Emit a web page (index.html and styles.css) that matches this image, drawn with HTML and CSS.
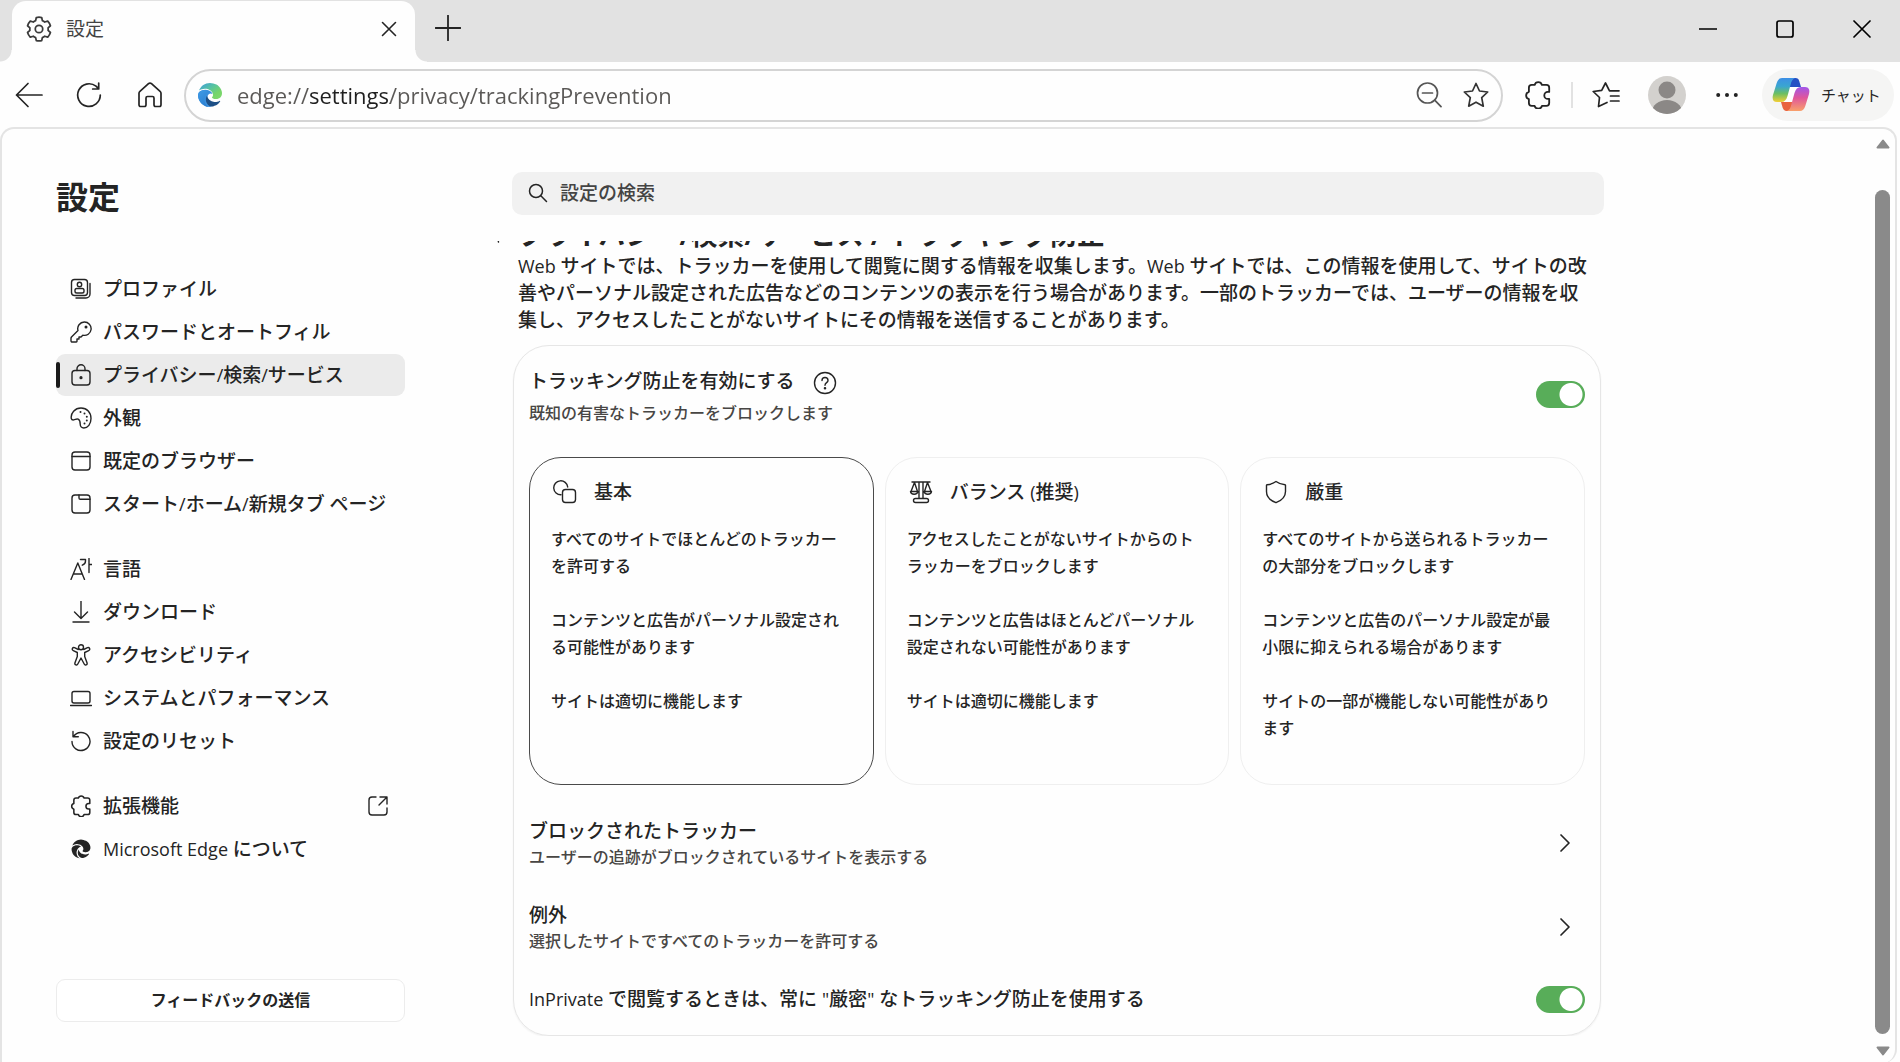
FILE: index.html
```html
<!DOCTYPE html>
<html lang="ja">
<head>
<meta charset="utf-8">
<meta name="viewport" content="width=device-width, initial-scale=1">
<title>設定</title>
<link rel="stylesheet" href="styles.css">
</head>
<body>
<svg class="sprite" aria-hidden="true">
  <symbol id="puzzle" viewBox="2 1.800 20 20"><path d="M9.600 4.600a2.700 2.700 0 0 1 5.200 0H18a2 2 0 0 1 2 2v3h-1a2.500 2.500 0 0 0 0 5h1v3a2 2 0 0 1-2 2h-3.200a2.700 2.700 0 0 1-5.200 0H7.500a2 2 0 0 1-2-2v-2.900a2.700 2.700 0 0 1 0-5.200V6.600a2 2 0 0 1 2-2z"/></symbol>
  <symbol id="search" viewBox="0 0 20 20"><circle cx="8" cy="8" r="6.500"/><path d="M12.800 12.800 18.500 18.500"/></symbol>
  <symbol id="chevron" viewBox="0 0 20 20"><path d="m6 2 8 8-8 8"/></symbol>
</svg>

<header class="titlebar">
  <div class="tab">
    <svg class="icon tab-gear" viewBox="0 0 24 24"><path d="M9.700 2.200a10 10 0 0 1 4.600 0l.6 2.600a7.600 7.600 0 0 1 2 1.200l2.600-.8a10 10 0 0 1 2.300 4l-2 1.800a7.600 7.600 0 0 1 0 2.200l2 1.800a10 10 0 0 1-2.300 4l-2.600-.8a7.600 7.600 0 0 1-2 1.200l-.6 2.600a10 10 0 0 1-4.600 0l-.6-2.600a7.600 7.600 0 0 1-2-1.200l-2.600.8a10 10 0 0 1-2.300-4l2-1.800a7.600 7.600 0 0 1 0-2.200l-2-1.800a10 10 0 0 1 2.300-4l2.600.8a7.600 7.600 0 0 1 2-1.200z"/><circle cx="12" cy="12" r="3.200"/></svg>
    <span class="tab-title">設定</span>
    <button class="bare tab-close" aria-label="タブを閉じる"><svg class="icon" viewBox="0 0 16 16"><path d="m1.500 1.500 13 13m0-13-13 13"/></svg></button>
  </div>
  <button class="bare new-tab" aria-label="新しいタブ"><svg class="icon" viewBox="0 0 26 26"><path d="M13 .5v25M.5 13h25"/></svg></button>
  <div class="window-controls">
    <button class="bare" aria-label="最小化"><svg class="icon" viewBox="0 0 18 18"><path d="M.5 9h17"/></svg></button>
    <button class="bare" aria-label="最大化"><svg class="icon" viewBox="0 0 18 18"><rect x="1" y="1" width="16" height="16" rx="2"/></svg></button>
    <button class="bare" aria-label="閉じる"><svg class="icon" viewBox="0 0 18 18"><path d="m1 1 16 16M17 1 1 17"/></svg></button>
  </div>
</header>

<div class="toolbar">
  <button class="bare tool" aria-label="戻る"><svg class="icon i28" viewBox="0 0 28 28"><path d="M27 14H1.500M13 2.500 1.500 14 13 25.500"/></svg></button>
  <button class="bare tool" aria-label="更新"><svg class="icon i26" viewBox="0 0 26 26"><path d="M24.300 13A11.300 11.300 0 1 1 20 4.200l2.700 2.600M22.700 1v6h-6"/></svg></button>
  <button class="bare tool" aria-label="ホーム"><svg class="icon i26" viewBox="0 0 26 26"><path d="M2 11.200c0-.8.3-1.400.9-1.900L11.500 1.700c.9-.8 2.100-.8 3 0l8.600 7.600c.6.5.9 1.100.9 1.900v11.600c0 1-.7 1.700-1.700 1.700h-3.600c-1 0-1.700-.7-1.700-1.700V16c0-.9-.6-1.500-1.500-1.500h-5c-.9 0-1.500.6-1.500 1.500v6.800c0 1-.7 1.700-1.700 1.700H3.700c-1 0-1.700-.7-1.700-1.700z"/></svg></button>
  <div class="address">
    <svg class="edge-logo" viewBox="0 0 24 24">
      <defs>
        <linearGradient id="eg1" x1="0" y1="0" x2="1" y2="1"><stop offset="0" stop-color="#3d9be0"/><stop offset=".4" stop-color="#57c4a0"/><stop offset=".7" stop-color="#76d56a"/><stop offset="1" stop-color="#7fd96c"/></linearGradient>
        <linearGradient id="eg2" x1="0" y1="0" x2=".6" y2="1"><stop offset="0" stop-color="#3f9be6"/><stop offset="1" stop-color="#2b7fd0"/></linearGradient>
      </defs>
      <path fill="#3a8fdd" d="M1 9C4 6.500 8 6 11 7.500c2 1 3 2 3.500 3.500-2-1.500-5 0-5 3 0 3.500 3 6.500 8 7L12 24C5 24 0 18 0 12z"/>
      <path fill="#1d4f86" d="M21.860 17.860q.14 0 .25.12.1.13.1.25t-.11.33l-.32.46-.43.53-.44.5q-.26.25-.38.37l-.22.23q-.58.53-1.340 1.040-.76.51-1.600.91-.86.4-1.740.64t-1.670.24q-.9 0-1.690-.28-.8-.28-1.480-.78-.68-.5-1.220-1.170-.53-.66-.92-1.440-.38-.77-.58-1.600-.2-.83-.2-1.670 0-1 .32-1.960.33-.97.87-1.800.14.95.55 1.770.41.82 1.020 1.500.6.68 1.380 1.210.78.54 1.640.9.86.36 1.770.56.92.2 1.800.2 1.120 0 2.180-.24 1.060-.23 2.060-.72l.2-.1.2-.05z"/>
      <path fill="url(#eg2)" d="M6.360 16.590q0 1.100.27 2.150.27 1.060.78 2.030.51.96 1.240 1.770.74.82 1.660 1.400-1.470-.2-2.800-.74-1.330-.55-2.480-1.370-1.150-.83-2.080-1.900-.92-1.070-1.580-2.330T.36 14.940Q0 13.540 0 12.060q0-.81.32-1.490.31-.68.83-1.230.53-.55 1.200-.96.66-.4 1.350-.66.74-.27 1.500-.39.78-.12 1.550-.12.7 0 1.420.1.72.12 1.400.35.68.23 1.320.57.63.35 1.160.83-.35 0-.7.07-.33.07-.65.23-.63.28-1.200.74-.57.46-1.050 1.040-.48.58-.87 1.260-.38.67-.65 1.390-.27.71-.42 1.440-.15.72-.15 1.380z"/>
      <path fill="url(#eg1)" d="M11.960.06q1.700 0 3.330.39 1.630.38 3.070 1.150 1.430.77 2.620 1.930 1.180 1.160 1.980 2.700.49.94.76 1.960.28 1 .28 2.080 0 .89-.23 1.700-.24.8-.69 1.480-.45.68-1.100 1.220-.64.53-1.450.88-.54.24-1.110.36-.58.13-1.160.13-.42 0-.97-.03-.54-.03-1.100-.12-.55-.1-1.050-.28-.5-.19-.84-.5-.12-.09-.23-.24-.1-.16-.1-.33 0-.15.16-.35.16-.2.35-.5.2-.28.36-.68.16-.4.16-.95 0-1.060-.4-1.960-.4-.91-1.060-1.640-.66-.74-1.520-1.280-.86-.55-1.790-.89-.84-.3-1.720-.44-.87-.14-1.760-.14-1.550 0-3.060.45T.94 7.550q.71-1.740 1.810-3.130 1.100-1.380 2.520-2.350Q6.680 1.100 8.370.58q1.700-.52 3.580-.52Z"/>
    </svg>
    <input class="url" type="text" aria-label="アドレス" value="edge://settings/privacy/trackingPrevention">
    <button class="bare tool-sm" aria-label="縮小"><svg class="icon i26" viewBox="0 0 26 26"><circle cx="11.500" cy="11" r="10"/><path d="M6.500 11h10M18.700 18.200l6.300 6.500"/></svg></button>
    <button class="bare tool-sm" aria-label="お気に入りに追加"><svg class="icon i26" viewBox="0 0 26 26"><path d="M13 1.500 16.500 9l8.200 1-6 5.700 1.600 8.500L13 20.200l-7.300 4 1.600-8.500-6-5.700 8.200-1z"/></svg></button>
  </div>
  <button class="bare tool" aria-label="拡張機能"><svg class="icon puzzle-lg"><use href="#puzzle"/></svg></button>
  <span class="separator"></span>
  <button class="bare tool" aria-label="お気に入り"><svg class="icon i28" viewBox="0 0 28 26"><path d="M15 20.500 6.500 24.500 7.500 15.500 1.200 9.500l8.500-1.200L13.500 1l4 7.800H27M18.500 14H27M18.500 19H27"/></svg></button>
  <button class="bare avatar" aria-label="プロファイル"><svg viewBox="0 0 38 38"><defs><clipPath id="av"><circle cx="19" cy="19" r="19"/></clipPath></defs><g clip-path="url(#av)"><rect width="38" height="38" fill="#d3d1ce"/><circle cx="19" cy="14" r="8.500" fill="#8b8886"/><ellipse cx="19" cy="36" rx="15" ry="12" fill="#8b8886"/></g></svg></button>
  <button class="bare dots" aria-label="設定など"><svg viewBox="0 0 22 6"><circle cx="2.200" cy="3" r="2"/><circle cx="11" cy="3" r="2"/><circle cx="19.800" cy="3" r="2"/></svg></button>
  <button class="copilot">
    <svg viewBox="0 0 38 35">
      <defs>
        <linearGradient id="cp1" x1="0" y1="0" x2="0" y2="1"><stop offset="0" stop-color="#3d8fe6"/><stop offset=".35" stop-color="#3aa6d0"/><stop offset=".65" stop-color="#6cbf62"/><stop offset="1" stop-color="#f3cf35"/></linearGradient>
        <linearGradient id="cp2" x1="0" y1="1" x2="0" y2="0"><stop offset="0" stop-color="#a155ea"/><stop offset=".45" stop-color="#e0569b"/><stop offset="1" stop-color="#f9a06a"/></linearGradient>
      </defs>
      <path fill="#fff" d="M18 8h10l-6 19H11z"/>
      <path fill="#2450c4" d="M20 1h3.500c2 0 3.200 1.200 3.800 3.200L29 10H16.500L18 4z"/>
      <path fill="#e9633f" d="M18 34h-3.500c-2 0-3.200-1.200-3.800-3.200L9 25h12.500L20 31z"/>
      <path fill="url(#cp1)" d="M10 1h13c-2.500 1-3.500 3-4.500 7l-3 11c-1.200 4-3 6-6.500 6H5c-4 0-5-3-4-7L4.700 6C5.800 2.600 7.500 1 10 1z"/>
      <path fill="url(#cp2)" transform="rotate(180 19 17.500)" d="M10 1h13c-2.500 1-3.500 3-4.500 7l-3 11c-1.200 4-3 6-6.500 6H5c-4 0-5-3-4-7L4.700 6C5.800 2.600 7.500 1 10 1z"/>
    </svg>
    <span>チャット</span>
  </button>
</div>

<div class="frame">
  <div class="page">
    <aside class="sidebar">
      <h2 class="side-title">設定</h2>
      <nav class="nav">
        <ul class="nav-group">
          <li><a class="nav-item" href="#"><svg class="icon" viewBox="0 0 22 22"><rect x="1.500" y="1.500" width="16" height="16" rx="3"/><circle cx="9.500" cy="6.500" r="2.200"/><rect x="5" y="10.500" width="9" height="4.500" rx="1.800"/><path d="M20 5.500v10.500a4 4 0 0 1-4 4H6"/></svg>プロファイル</a></li>
          <li><a class="nav-item" href="#"><svg class="icon" viewBox="0 0 22 22"><path d="M14.300 1a6.700 6.700 0 1 1-1.500 13.200L11 16H9v2H7v2.300c0 .4-.3.700-.7.700H2.200c-.7 0-1.200-.5-1.200-1.200v-2.500c0-.5.2-.9.500-1.300L8 9.600A6.700 6.700 0 0 1 14.300 1z"/><circle cx="16" cy="6" r=".8" fill="currentColor"/></svg>パスワードとオートフィル</a></li>
          <li><a class="nav-item current" href="#" aria-current="page"><svg class="icon" viewBox="0 0 22 22"><rect x="2" y="6.500" width="18" height="14.500" rx="3"/><path d="M7 6.500V4.800a4 4 0 0 1 8 0v1.700"/><circle cx="11" cy="13.700" r=".9" fill="currentColor"/></svg><span>プライバシー<span class="latin">/</span>検索<span class="latin">/</span>サービス</span></a></li>
          <li><a class="nav-item" href="#"><svg class="icon" viewBox="0 0 22 22"><path d="M1.300 11.500C.5 6 5 1 11 1c6 0 10 4.500 10 10.500 0 5.500-3.200 9.500-7.200 9.500-2.300 0-3.600-1.700-3.600-4 0-2-.2-4-2-4.800-1.700-.8-2.700.4-4.400.7-1.300.2-2.200-.2-2.500-1.400z"/><g fill="currentColor" stroke="none"><circle cx="10.500" cy="5" r="1"/><circle cx="14.500" cy="6.500" r="1"/><circle cx="16.800" cy="9.800" r="1"/><circle cx="16.800" cy="13.500" r="1"/><circle cx="14.500" cy="16.500" r="1"/></g></svg>外観</a></li>
          <li><a class="nav-item" href="#"><svg class="icon" viewBox="0 0 22 22"><rect x="2" y="2" width="18" height="18" rx="3"/><path d="M2 6.500h18"/></svg>既定のブラウザー</a></li>
          <li><a class="nav-item" href="#"><svg class="icon" viewBox="0 0 22 22"><rect x="2" y="2" width="18" height="18" rx="3"/><path d="M9 2v3c0 .8.5 1.300 1.300 1.300H20"/></svg><span>スタート<span class="latin">/</span>ホーム<span class="latin">/</span>新規タブ ページ</span></a></li>
        </ul>
        <ul class="nav-group">
          <li><a class="nav-item" href="#"><svg class="icon" viewBox="0 0 22 22"><path d="M1 21.500 7.800 5l6.700 16.500M3.300 16h9M10.500 1.500h5v1.500c0 2.200-1.200 3.500-3.200 4.200M19 .5v14M19 6.500h3"/></svg>言語</a></li>
          <li><a class="nav-item" href="#"><svg class="icon" viewBox="0 0 22 22"><path d="M11 0v17M4.500 11l6.500 6.500 6.500-6.500M3 21h16"/></svg>ダウンロード</a></li>
          <li><a class="nav-item" href="#"><svg class="icon" viewBox="0 0 22 22"><circle cx="11" cy="3.200" r="2.500"/><path d="M8.300 5.500 4.500 3.700C2.500 3 1.300 5.700 3.300 6.600L7.300 8.500v4L5 18.800c-.7 2.200 2 3 2.800 1.200L11 14l3.200 6c.8 1.800 3.500 1 2.800-1.200L14.700 12.500v-4l4-1.900c2-.9.8-3.600-1.200-2.900l-3.800 1.800"/></svg>アクセシビリティ</a></li>
          <li><a class="nav-item" href="#"><svg class="icon" viewBox="0 0 22 22"><rect x="2" y="4.500" width="18" height="11.500" rx="2"/><path d="M.5 18.500h21"/></svg>システムとパフォーマンス</a></li>
          <li><a class="nav-item" href="#"><svg class="icon" viewBox="0 0 22 22"><path d="M3.500 6.500A9 9 0 1 1 2 11.500M3 1.500v5.300h5.300"/></svg>設定のリセット</a></li>
        </ul>
        <ul class="nav-group">
          <li><a class="nav-item" href="#"><svg class="icon"><use href="#puzzle"/></svg>拡張機能<svg class="icon external" viewBox="0 0 22 22"><path d="M9 2H5a3 3 0 0 0-3 3v12a3 3 0 0 0 3 3h12a3 3 0 0 0 3-3v-4M13 2h7v7M20 2l-8 8"/></svg></a></li>
          <li><a class="nav-item" href="#"><svg class="icon" viewBox="-2 -2 28 28"><g fill="currentColor" stroke="none"><path d="M21.860 17.860q.14 0 .25.12.1.13.1.25t-.11.33l-.32.46-.43.53-.44.5q-.26.25-.38.37l-.22.23q-.58.53-1.340 1.040-.76.51-1.600.91-.86.4-1.740.64t-1.670.24q-.9 0-1.690-.28-.8-.28-1.480-.78-.68-.5-1.220-1.170-.53-.66-.92-1.440-.38-.77-.58-1.600-.2-.83-.2-1.670 0-1 .32-1.960.33-.97.87-1.800.14.95.55 1.770.41.82 1.020 1.500.6.68 1.380 1.210.78.54 1.640.9.86.36 1.770.56.92.2 1.800.2 1.120 0 2.180-.24 1.060-.23 2.060-.72l.2-.1.2-.05z"/><path d="M6.360 16.590q0 1.100.27 2.150.27 1.060.78 2.030.51.96 1.240 1.770.74.82 1.660 1.400-1.470-.2-2.800-.74-1.330-.55-2.480-1.370-1.150-.83-2.080-1.900-.92-1.070-1.580-2.330T.36 14.940Q0 13.540 0 12.060q0-.81.32-1.490.31-.68.83-1.230.53-.55 1.200-.96.66-.4 1.350-.66.74-.27 1.500-.39.78-.12 1.550-.12.7 0 1.420.1.72.12 1.400.35.68.23 1.320.57.63.35 1.160.83-.35 0-.7.07-.33.07-.65.23-.63.28-1.200.74-.57.46-1.050 1.040-.48.58-.87 1.260-.38.67-.65 1.390-.27.71-.42 1.440-.15.72-.15 1.380z"/><path d="M11.960.06q1.700 0 3.330.39 1.630.38 3.070 1.150 1.430.77 2.620 1.930 1.180 1.160 1.980 2.700.49.94.76 1.960.28 1 .28 2.080 0 .89-.23 1.700-.24.8-.69 1.480-.45.68-1.100 1.220-.64.53-1.450.88-.54.24-1.110.36-.58.13-1.160.13-.42 0-.97-.03-.54-.03-1.100-.12-.55-.1-1.050-.28-.5-.19-.84-.5-.12-.09-.23-.24-.1-.16-.1-.33 0-.15.16-.35.16-.2.35-.5.2-.28.36-.68.16-.4.16-.95 0-1.060-.4-1.960-.4-.91-1.060-1.640-.66-.74-1.520-1.280-.86-.55-1.790-.89-.84-.3-1.720-.44-.87-.14-1.760-.14-1.550 0-3.060.45T.94 7.550q.71-1.740 1.810-3.130 1.100-1.380 2.520-2.350Q6.680 1.100 8.370.58q1.700-.52 3.580-.52Z"/></g></svg><span><span class="latin">Microsoft Edge </span>について</span></a></li>
        </ul>
      </nav>
      <button class="feedback">フィードバックの送信</button>
    </aside>

    <main class="main">
      <label class="search">
        <svg class="icon"><use href="#search"/></svg>
        <input type="search" placeholder="設定の検索" aria-label="設定の検索">
      </label>
      <div class="scroller">
        <div class="content">
          <div class="heading">
            <button class="bare back" aria-label="戻る"><svg class="icon" viewBox="0 0 8 16"><path d="M5.500 1 1 8l1.500 7"/></svg></button>
            <h1>プライバシー/検索/サービス / トラッキング防止</h1>
          </div>
          <p class="intro"><span class="latin">Web </span>サイトでは、トラッカーを使用して閲覧に関する情報を収集します。<span class="latin">Web </span>サイトでは、この情報を使用して、サイトの改善やパーソナル設定された広告などのコンテンツの表示を行う場合があります。一部のトラッカーでは、ユーザーの情報を収集し、アクセスしたことがないサイトにその情報を送信することがあります。</p>
          <section class="panel">
            <div class="row">
              <div>
                <div class="row-head"><label class="row-title" for="enable">トラッキング防止を有効にする</label><button class="bare help" aria-label="ヘルプ"><svg class="icon" viewBox="0 0 24 24"><circle cx="12" cy="12" r="10.500"/><path d="M9 9.500c0-1.900 1.300-3 3-3s3 1.100 3 2.900c0 2.200-3 2.300-3 4.800"/><circle cx="12" cy="17.200" r=".6" fill="currentColor"/></svg></button></div>
                <div class="row-sub">既知の有害なトラッカーをブロックします</div>
              </div>
              <input class="toggle" type="checkbox" role="switch" id="enable" checked>
            </div>
            <div class="levels">
              <label class="level">
                <input class="hidden-radio" type="radio" name="level" checked>
                <span class="level-head"><svg class="icon" viewBox="0 0 24 24"><path d="M8 14.800A7 7 0 1 1 14.700 7"/><rect x="9.500" y="9.500" width="13" height="13" rx="3"/></svg>基本</span>
                <span class="level-text">すべてのサイトでほとんどのトラッカーを許可する</span>
                <span class="level-text">コンテンツと広告がパーソナル設定される可能性があります</span>
                <span class="level-text">サイトは適切に機能します</span>
              </label>
              <label class="level">
                <input class="hidden-radio" type="radio" name="level">
                <span class="level-head"><svg class="icon" viewBox="0 0 24 24"><path d="M3 2h18M10 2v16M14 2v16M5.500 2.500l-3.500 9h6.500zM18.500 2.500l-3 9H22zM1.500 11.500c.3 3.700 7 3.700 7.300 0zM15.200 11.500c.3 3.700 7 3.700 7.300 0z"/><rect x="4.500" y="18.500" width="15" height="4" rx="2"/></svg><span>バランス <span class="latin">(</span>推奨<span class="latin">)</span></span></span>
                <span class="level-text">アクセスしたことがないサイトからのトラッカーをブロックします</span>
                <span class="level-text">コンテンツと広告はほとんどパーソナル設定されない可能性があります</span>
                <span class="level-text">サイトは適切に機能します</span>
              </label>
              <label class="level">
                <input class="hidden-radio" type="radio" name="level">
                <span class="level-head"><svg class="icon" viewBox="0 0 24 24"><path d="M12 1.500c2.700 2 5.600 3 9 3.200.4 0 .5.200.5.600v6.200c0 5-3 8.700-9.500 11.200-6.500-2.500-9.500-6.200-9.500-11.200V5.300c0-.4.100-.6.500-.6 3.400-.2 6.300-1.200 9-3.200z"/></svg>厳重</span>
                <span class="level-text">すべてのサイトから送られるトラッカーの大部分をブロックします</span>
                <span class="level-text">コンテンツと広告のパーソナル設定が最小限に抑えられる場合があります</span>
                <span class="level-text">サイトの一部が機能しない可能性があります</span>
              </label>
            </div>
            <a class="row" href="#">
              <span><span class="row-title">ブロックされたトラッカー</span><span class="row-sub">ユーザーの追跡がブロックされているサイトを表示する</span></span>
              <svg class="icon chevron"><use href="#chevron"/></svg>
            </a>
            <a class="row" href="#">
              <span><span class="row-title">例外</span><span class="row-sub">選択したサイトですべてのトラッカーを許可する</span></span>
              <svg class="icon chevron"><use href="#chevron"/></svg>
            </a>
            <div class="row">
              <label class="row-title" for="inprivate"><span class="latin">InPrivate </span>で閲覧するときは、常に <span class="latin">"</span>厳密<span class="latin">"</span> なトラッキング防止を使用する</label>
              <input class="toggle" type="checkbox" role="switch" id="inprivate" checked>
            </div>
          </section>
        </div>
      </div>
    </main>
  </div>
  <div class="scrollbar" aria-hidden="true">
    <svg viewBox="0 0 14 10"><path d="M7 1.500 12.500 8.500H1.500z"/></svg>
    <span class="thumb"></span>
    <svg viewBox="0 0 14 10"><path d="M1.500 1.500h11L7 8.500z"/></svg>
  </div>
</div>
</body>
</html>
```
FILE: styles.css
```css
* { box-sizing: border-box; }

body {
  margin: 0;
  min-height: 100vh;
  display: flex;
  flex-direction: column;
  background: #fefefe;
  color: #242424;
  font-family: "Open Sans", "Noto Sans CJK JP", sans-serif;
  font-size: 19px;
  font-weight: 500;
  line-height: 28px;
}

h1, h2, p, ul { margin: 0; padding: 0; }
ul { list-style: none; }
a { color: inherit; text-decoration: none; }
button, input { font: inherit; color: inherit; }
.latin { font-size: 18px; font-weight: 400; }

.sprite { display: none; }

.bare {
  display: flex;
  align-items: center;
  justify-content: center;
  padding: 0;
  border: 0;
  background: none;
}

.icon {
  flex: none;
  display: block;
  fill: none;
  stroke: currentColor;
  stroke-width: 1.4;
  stroke-linecap: round;
  stroke-linejoin: round;
}
.i26 { width: 26px; height: 26px; stroke-width: 1.7; }
.i28 { width: 28px; height: 28px; stroke-width: 1.7; }

/* Title bar */
.titlebar {
  display: flex;
  height: 62px;
  padding-left: 12px;
  background: #e2e2e2;
}
.tab {
  position: relative;
  display: flex;
  align-items: center;
  width: 403px;
  margin-top: 1px;
  padding: 0 18px 6px 13px;
  border-radius: 14px 14px 0 0;
  background: #fefefe;
}
.tab::before, .tab::after {
  content: "";
  position: absolute;
  bottom: 0;
  width: 12px;
  height: 12px;
}
.tab::before { left: -12px; background: radial-gradient(circle at 0 0, transparent 11px, #fefefe 12px); }
.tab::after { right: -12px; background: radial-gradient(circle at 100% 0, transparent 11px, #fefefe 12px); }
.tab-gear { width: 28px; height: 28px; stroke-width: 1.5; color: #3a3a3a; }
.tab-title { flex: 1; margin-left: 13px; color: #444; font-weight: 400; }
.tab-close svg { width: 16px; height: 16px; stroke-width: 1.6; }
.new-tab { margin: 0 0 6px 20px; }
.new-tab svg { width: 26px; height: 26px; stroke-width: 1.8; }
.window-controls { display: flex; margin: 0 0 4px auto; color: #000; }
.window-controls .bare { width: 77px; }
.window-controls svg { width: 18px; height: 18px; stroke-width: 1.7; }

/* Toolbar */
.toolbar {
  display: flex;
  align-items: center;
  height: 65px;
  padding: 0 6px 0 0;
}
.tool { width: 61px; height: 52px; }
.tool:first-child { width: 58px; }
.address {
  flex: 1;
  display: flex;
  align-items: center;
  height: 53px;
  margin: 1px 4px 0;
  padding: 0 2px 0 12px;
  border: 2px solid #d4d4d4;
  border-radius: 27px;
}
.edge-logo { flex: none; width: 24px; height: 24px; }
.url {
  flex: 1;
  min-width: 0;
  height: 40px;
  margin-left: 15px;
  padding: 0;
  border: 0;
  outline: 0;
  font-family: "Open Sans", sans-serif;
  font-size: 22px;
  font-weight: 400;
  color: transparent;
  background: linear-gradient(90deg, #5a5856 72px, #1f1f1f 72px, #1f1f1f 153px, #5a5856 153px);
  background-clip: text;
  -webkit-background-clip: text;
}
.tool-sm { width: 48px; height: 44px; color: #555; }
.tool-sm:last-child { color: #333; }
.tool-sm + .tool-sm { width: 46px; }
.puzzle-lg { width: 28px; height: 28px; stroke-width: 1.3; }
.separator { width: 2px; height: 26px; margin: 0 2px 0 3px; background: #e2e2e2; }
.avatar { width: 38px; height: 38px; margin: 0 30px 0 12px; }
.avatar svg { width: 38px; height: 38px; }
.dots { width: 22px; height: 40px; margin-right: 24px; }
.dots svg { width: 22px; height: 6px; fill: #222; }
.copilot {
  display: flex;
  align-items: center;
  gap: 11px;
  width: 132px;
  height: 52px;
  padding: 0 0 0 10px;
  border: 0;
  border-radius: 26px;
  background: #f5f5f4;
  font-size: 15px;
  font-weight: 400;
  white-space: nowrap;
}
.copilot svg { flex: none; width: 38px; height: 35px; }

/* Page frame */
.frame {
  flex: 1;
  display: flex;
  border: 2px solid #e4e4e4;
  border-bottom: 0;
  border-radius: 14px 14px 14px 0;
  margin-right: 3px;
}
.page {
  flex: 1;
  display: grid;
  grid-template-columns: 349px minmax(0, 1108px);
  column-gap: 91px;
  padding: 43px 0 27px 54px;
}

/* Sidebar */
.sidebar { display: flex; flex-direction: column; padding: 5px 0 14px; }
.side-title { margin-bottom: 51px; font-size: 32px; line-height: 40px; font-weight: 700; }
.nav { display: flex; flex-direction: column; gap: 23px; }
.nav-group { display: flex; flex-direction: column; gap: 1px; }
.nav-item {
  position: relative;
  display: flex;
  align-items: center;
  height: 42px;
  padding: 0 16px 0 14px;
  border-radius: 9px;
}
.nav-item .icon { width: 22px; height: 22px; margin-right: 11px; }
.nav-item .external { margin: 0 0 0 auto; }
.current { background: #ebebeb; }
.current::before {
  content: "";
  position: absolute;
  left: 0;
  top: 8px;
  bottom: 8px;
  width: 4px;
  border-radius: 2px;
  background: #1b1b1b;
}
.feedback {
  height: 43px;
  margin-top: auto;
  padding-bottom: 2px;
  border: 1px solid #ececec;
  border-radius: 9px;
  background: #fff;
  font-size: 16px;
  font-weight: 700;
}

/* Main column */
.search {
  display: flex;
  align-items: center;
  gap: 12px;
  height: 43px;
  margin-left: 16px;
  padding: 0 16px 2px;
  border-radius: 10px;
  background: #f1f1f1;
}
.search .icon { width: 20px; height: 20px; stroke-width: 1.5; }
.search input { flex: 1; min-width: 0; padding: 0; border: 0; outline: 0; background: none; }
.search input::placeholder { color: #444; opacity: 1; }

.scroller { margin-top: 26px; overflow: hidden; }
.content { margin-top: -24px; }
.heading { display: flex; align-items: center; height: 36px; }
.heading .back { width: 22px; justify-content: flex-start; }
.heading .back svg { width: 8px; height: 16px; }
.heading h1 { font-size: 27px; line-height: 36px; font-weight: 700; white-space: nowrap; }
.intro { padding: 0 12px 0 22px; line-height: 27px; }

.panel {
  display: flex;
  flex-direction: column;
  gap: 32px;
  margin: 11px 3px 0 17px;
  padding: 18px 15px 22px 15px;
  border: 1px solid #e6e6e6;
  border-radius: 36px;
  box-shadow: 0 1px 2px rgba(0, 0, 0, .06);
}
.row { display: flex; align-items: center; justify-content: space-between; }
.row-head { display: flex; align-items: center; gap: 18px; height: 33px; margin-bottom: 4px; }
.row-title { display: block; }
.row-sub { display: block; font-size: 16px; line-height: 24px; color: #484644; }
.help { margin-top: 4px; }
.help svg { width: 24px; height: 24px; }
.chevron { width: 20px; height: 20px; margin-right: 10px; stroke-width: 1.7; }

.toggle {
  appearance: none;
  flex: none;
  width: 49px;
  height: 27px;
  margin: 0;
  border-radius: 14px;
  background: radial-gradient(circle at 35px 50%, #fff 11px, transparent 12px), #58ad59;
}

.levels { display: grid; grid-template-columns: repeat(3, minmax(0, 1fr)); gap: 11px; }
.level {
  position: relative;
  display: block;
  padding: 20px 21px 42px;
  border: 1px solid #efefef;
  border-radius: 32px;
}
.level:has(:checked) { border-color: #4a4a4a; }
.hidden-radio { position: absolute; opacity: 0; }
.level-head { display: flex; align-items: center; gap: 17px; margin-bottom: 20px; padding-left: 2px; }
.level-head .icon { width: 24px; height: 24px; }
.level-text { display: block; font-size: 16px; line-height: 27px; }
.level-text + .level-text { margin-top: 27px; }

/* Scrollbar */
.scrollbar {
  display: flex;
  flex-direction: column;
  align-items: center;
  width: 25px;
  padding: 10px 0 7px;
}
.scrollbar svg {
  width: 14px;
  height: 10px;
  fill: #8a8a8a;
  stroke: #8a8a8a;
  stroke-width: 2;
  stroke-linejoin: round;
}
.thumb { flex: 1; width: 15px; margin: 41px 0 12px; border-radius: 8px; background: #8a8a8a; }
```
